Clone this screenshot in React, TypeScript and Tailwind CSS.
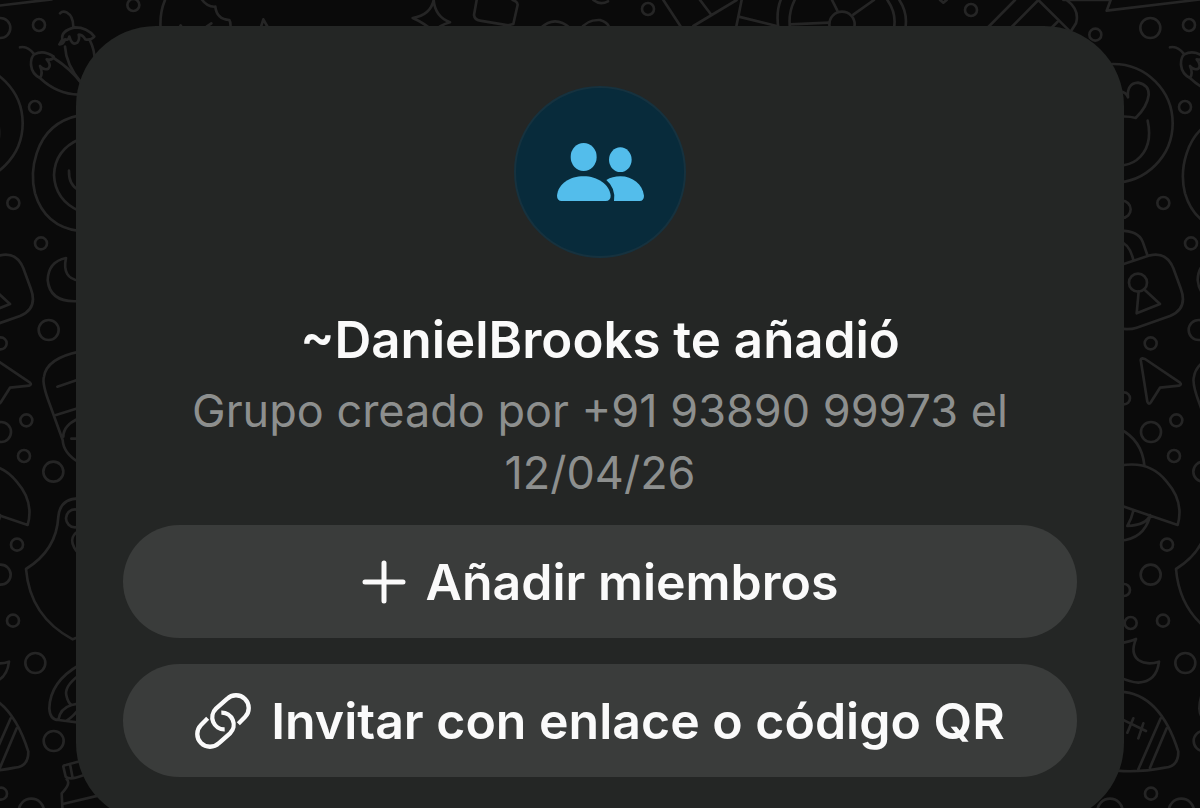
import type { ReactNode } from 'react';

const smallDots = [
  [117, 75], [105, 321], [40, 609], [123, 730], [2, 1030], [79, 1261], [72, 1368], [51, 1634],
  [39, 1862], [-58, 1869], [3, 2381], [-78, 1195], [-78, 1770], [-164, 104],
];

const bigDots = [[1, 84], [146, 990], [3, 1296], [160, 1415], [2, 1724], [106, 1989], [161, 2223]];

function DoodleTile() {
  return (
    <g>
      {smallDots.map(([x, y]) => (
        <circle key={`${x}-${y}`} cx={x} cy={y} r="18" />
      ))}
      {bigDots.map(([x, y]) => (
        <circle key={`${x}-${y}`} cx={x} cy={y} r="30" />
      ))}
      <circle cx="94" cy="2434" r="38" />
      <circle cx="-120" cy="2434" r="38" />
      <circle cx="-84" cy="628" r="26" />

      {/* aubergines */}
      <path d="M180 40Q188 31 200 37Q220 48 220 80M178 133Q190 134 195 118Q205 122 208 110Q216 138 232 128Q240 118 236 104Q248 104 256 118Q272 122 283 110Q262 82 225 82Q182 92 187 118ZM195 140Q198 195 245 250M270 122Q284 150 284 182" />
      <path d="M60 142Q82 136 103 163M103 163Q130 148 161 170Q158 182 140 178Q155 195 145 206Q132 212 120 198Q130 220 120 234Q96 222 93 195Q92 172 103 163ZM120 234Q170 282 236 284M161 174Q210 205 245 250" />

      {/* heart-eyed face */}
      <circle cx="-110" cy="370" r="178" />
      <path d="M-90 275Q-72 275 -66 292Q-70 250 -36 248Q-2 255 -4 285Q-8 320 -43 354Q-62 348 -90 350M-7 362Q10 440 -40 480Q-60 495 -90 497" />

      {/* spiral */}
      <path d="M238 346Q140 366 110 460Q90 520 105 580Q135 680 238 693M238 418Q165 450 162 525Q165 600 238 633M207 512Q205 555 238 572" />
      <path d="M-260 0L-118 0L-130 32L155 -2" />

      {/* moon, padlock, cursor */}
      <path d="M238 903Q150 910 143 840Q145 785 198 774Q185 835 238 842" />
      <path d="M-90 796L0 766Q50 755 70 805L92 865Q115 925 60 948L-40 983Q-60 990 -90 986M-90 692Q-35 692 -22 725L-8 765M-90 726Q-62 730 -50 780" />
      <circle cx="-36" cy="848" r="27" />
      <path d="M-34 874L-40 940L30 912L-18 868" />
      <path d="M-23 1075Q-30 1075 -27 1085L-8 1205Q-4 1217 3 1206L30 1163L88 1157Q96 1153 90 1148L-15 1077Z" />

      {/* pill bottle */}
      <path d="M238 1055Q140 1075 132 1130Q125 1150 150 1215L188 1320Q190 1360 238 1388M172 1160L238 1138M168 1245L238 1223M190 1310Q190 1275 238 1255M214 1316H238" />

      {/* mushroom */}
      <path d="M-90 1287Q-25 1320 -17 1395M-90 1397Q0 1380 50 1445Q103 1505 83 1575L-90 1516M-50 1532Q-55 1555 -68 1578Q-10 1575 0 1545M-90 1622Q-20 1618 0 1550" />

      {/* guitar body */}
      <path d="M238 1495Q180 1495 175 1550Q170 1650 78 1707Q90 1850 218 1918L238 1910M238 1592Q195 1615 238 1664" />
      <circle cx="225" cy="1555" r="27" />

      {/* moon and football */}
      <path d="M-90 1930Q-60 1925 -42 1917Q-60 1960 -35 1980Q-10 1997 27 1985Q20 2045 -35 2048Q-60 2046 -90 2032" />
      <path d="M-90 2075Q30 2080 85 2255Q85 2300 45 2303Q-30 2318 -100 2312M32 2155L-35 2308M50 2185L0 2303M-90 2155L-12 2193M-50 2155L-68 2198M-20 2170L-35 2215" />

      {/* shell and bottle */}
      <path d="M238 1995Q150 2045 148 2125Q150 2160 175 2160L238 2168M238 2025Q190 2060 200 2090Q205 2110 215 2115L238 2110M175 2160Q180 2125 215 2115M200 2162Q220 2150 238 2125" />
      <path d="M190 2300Q190 2295 198 2295L245 2282M190 2300L197 2330Q210 2342 250 2326M210 2293L218 2334M200 2338Q214 2350 185 2380L188 2440M188 2412L295 2387" />
    </g>
  );
}

function Wallpaper() {
  return (
    <svg
      aria-hidden="true"
      className="absolute inset-0 h-full w-full"
      viewBox="0 0 3600 2424"
      preserveAspectRatio="xMidYMin slice"
      fill="none"
      stroke="#252525"
      strokeWidth="8"
      strokeLinecap="round"
      strokeLinejoin="round"
    >
      <DoodleTile />
      <g transform="translate(3450 0)">
        <DoodleTile />
      </g>
      <g>
        <circle cx="400" cy="15" r="18" />
        <path d="M495 0Q478 40 482 90M605 -2Q622 22 646 20Q650 58 688 60Q694 70 690 90M535 90L542 76L550 90M620 80L634 70M780 90L790 58L808 90" />
        <path d="M1301 0Q1292 45 1238 54Q1275 70 1301 95Q1320 75 1350 67Q1305 50 1301 0Z" />
        <path d="M1430 0L1422 45Q1424 60 1440 62L1525 76L1540 72L1553 14Q1552 4 1538 0M1622 84Q1665 44 1710 84M1740 90Q1760 58 1800 60Q1820 66 1826 78M1780 0Q1800 16 1824 4" />
        <circle cx="1944" cy="27" r="18" />
        <path d="M1990 0L2045 84M2080 78L2210 0M2100 0L2132 42M2225 0L2208 84M2216 50L2330 78" />
        <path d="M2342 0Q2328 35 2335 84M2384 0Q2364 40 2370 84M2662 0Q2690 40 2682 84M2698 0Q2724 40 2716 84M2370 73L2488 68M2496 0L2512 32M2560 44L2622 0" />
        <circle cx="2526" cy="73" r="38" />
        <circle cx="2913" cy="30" r="18" />
        <path d="M2820 0L2830 8L2840 0M3045 0L2962 84M3115 0L3032 84M3115 0L3210 94M3172 66L3148 90M3200 0Q3240 30 3228 70L3210 98" />
      </g>
    </svg>
  );
}

function PeopleIcon() {
  return (
    <svg aria-hidden="true" className="h-[58px] w-[87px]" viewBox="170 218 261 174" fill="#53bdeb">
      <ellipse cx="250" cy="260" rx="39" ry="42" />
      <ellipse cx="360" cy="268" rx="34" ry="37" />
      <path d="M184 392Q170 391 170 376C174 340 208 318 250 318C292 318 327 342 331 376Q331 391 316 392Z" />
      <path d="M318 329Q336 318 360 318C397 318 427 342 431 376Q431 391 418 392H341Q347 354 318 329Z" />
    </svg>
  );
}

function PlusIcon() {
  return (
    <svg aria-hidden="true" className="h-11 w-11 shrink-0" viewBox="0 0 44 44" stroke="#fafafa" strokeWidth="5" strokeLinecap="round">
      <path d="M22 3V41M3 22H41" />
    </svg>
  );
}

function LinkIcon() {
  return (
    <svg
      aria-hidden="true"
      className="h-14 w-14 shrink-0"
      viewBox="-1 -1 168 168"
      fill="none"
      stroke="#fafafa"
      strokeWidth="13"
    >
      <path d="M129 91L149 71A38 38 0 0 0 95 17L62 46A36 36 0 0 0 88 108" />
      <path d="M37 75L17 95A38 38 0 0 0 71 149L104 120A36 36 0 0 0 78 58" />
    </svg>
  );
}

function ActionButton({ icon, children }: { icon: ReactNode; children: ReactNode }) {
  return (
    <button
      type="button"
      className="flex h-[113px] w-full items-center justify-center gap-5 rounded-full bg-[#3a3c3b] pt-px text-[50px] font-semibold text-[#fafafa]"
    >
      {icon}
      <span className="whitespace-nowrap">{children}</span>
    </button>
  );
}

export default function App() {
  return (
    <main className="relative h-screen overflow-hidden bg-[#0a0a0a] px-[76px] pt-[26px] font-['Inter','Liberation_Sans',sans-serif]">
      <Wallpaper />
      <section className="relative flex flex-col items-center rounded-[80px] bg-[#242625] px-[47px] pt-[60px] pb-[46px] text-center">
        <div className="flex size-[172px] items-center justify-center rounded-full border-2 border-[#16323f] bg-[#082b3b]">
          <PeopleIcon />
        </div>
        <h1 className="mt-[50px] text-[51px] leading-[64px] font-semibold text-[#fafafa]">~DanielBrooks te añadió</h1>
        <p className="mt-2 text-[45px] leading-[62px] text-[#8d8f8e]">
          Grupo creado por +91 93890 99973 el 12/04/26
        </p>
        <div className="mt-[21px] flex w-full flex-col gap-[26px]">
          <ActionButton icon={<PlusIcon />}>Añadir miembros</ActionButton>
          <ActionButton icon={<LinkIcon />}>Invitar con enlace o código QR</ActionButton>
        </div>
      </section>
    </main>
  );
}
